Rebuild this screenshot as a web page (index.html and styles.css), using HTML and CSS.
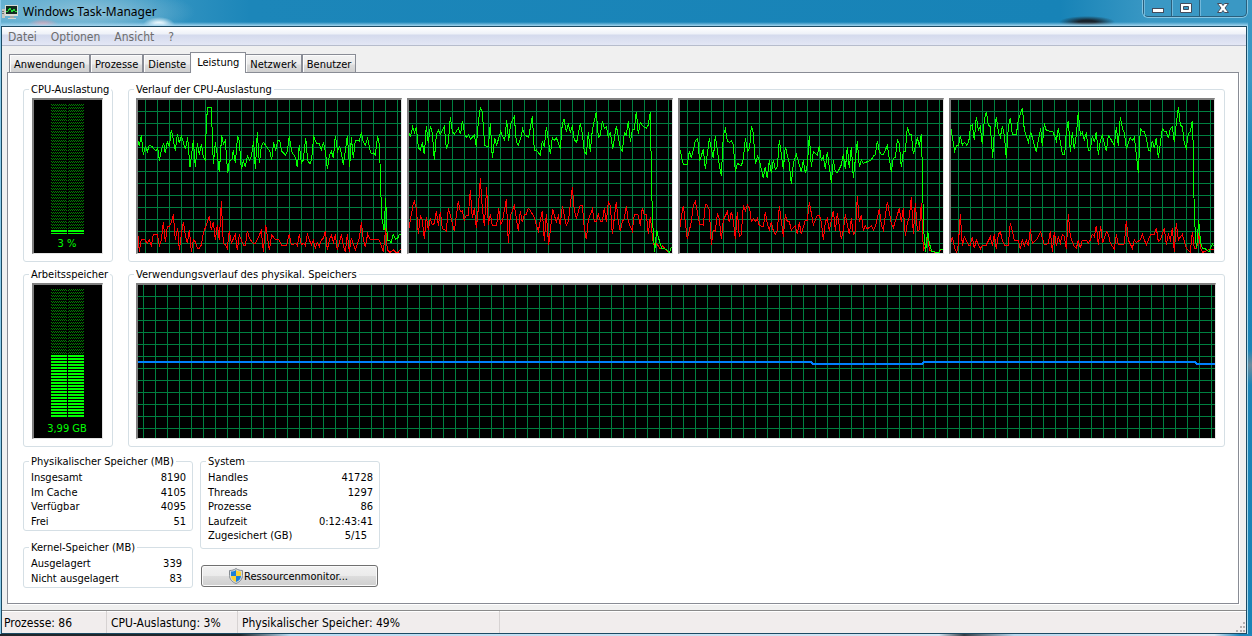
FILE: index.html
```html
<!DOCTYPE html>
<html lang="de">
<head>
<meta charset="utf-8">
<title>Windows Task-Manager</title>
<link rel="stylesheet" href="styles.css">
</head>
<body>
<div class="window">
  <header class="titlebar">
    <svg class="app-icon" width="16" height="16" viewBox="0 0 16 16" shape-rendering="crispEdges">
      <path fill="#c8c8c0" d="M0 4h3v9H0z"/><path fill="#6f7471" d="M0 6h2v1H0zM0 8h2v1H0z"/>
      <path fill="#d8dad4" d="M3 0h13v11H3z"/><path fill="#132b20" d="M4 1h11v8H4z"/>
      <path fill="none" stroke="#20df35" d="M4 6h2l2-3 2 4 2-3 1 2h2"/>
      <path fill="#a6aaa6" d="M8 11h4v2H8z"/><path fill="#d5d5cd" d="M6 13h8v1H6z"/>
    </svg>
    <h1 class="title">Windows Task-Manager</h1>
    <div class="controls">
      <button class="control" aria-label="Minimieren"><svg width="14" height="12" viewBox="0 0 14 12"><rect x="1.500" y="6.500" width="11" height="4" fill="#fff" stroke="#444c5c"/></svg></button>
      <button class="control" aria-label="Maximieren"><svg width="14" height="12" viewBox="0 0 14 12"><path fill="#fff" fill-rule="evenodd" stroke="#444c5c" d="M1.500 1.500h11v9h-11zM4.500 4.500v3h5v-3z"/></svg></button>
      <button class="control control-close" aria-label="Schließen"><svg width="14" height="12" viewBox="0 0 14 12"><path fill="#fff" stroke="#444c5c" d="M1.500 1.500h4L7 3.500l1.500-2h4L9 6l3.500 4.500h-4L7 8.500l-1.500 2h-4L5 6z"/></svg></button>
    </div>
  </header>
  <div class="client">
    <nav class="menu">
      <button class="menu-item">Datei</button>
      <button class="menu-item">Optionen</button>
      <button class="menu-item">Ansicht</button>
      <button class="menu-item">?</button>
    </nav>
    <div class="tabs" role="tablist">
      <button class="tab" role="tab">Anwendungen</button>
      <button class="tab" role="tab">Prozesse</button>
      <button class="tab" role="tab">Dienste</button>
      <button class="tab tab-active" role="tab" aria-selected="true">Leistung</button>
      <button class="tab" role="tab">Netzwerk</button>
      <button class="tab" role="tab">Benutzer</button>
    </div>
    <main class="panel">
      <div class="row">
        <fieldset class="group gauge-group">
          <legend>CPU-Auslastung</legend>
          <div class="gauge">
            <svg class="bars" width="33" height="130" shape-rendering="crispEdges">
              <defs>
                <pattern id="dim" width="2" height="3" patternUnits="userSpaceOnUse"><path fill="#008000" d="M0 0h1v1H0zM1 1h1v1H1z"/></pattern>
                <pattern id="lit" width="2" height="3" patternUnits="userSpaceOnUse"><path fill="#00ff00" d="M0 0h2v2H0z"/></pattern>
              </defs>
              <path fill="url(#dim)" d="M0 0h16v126H0zM17 0h16v126H17z"/>
              <path fill="url(#lit)" d="M0 126h16v4H0zM17 126h16v4H17z"/>
            </svg>
            <span class="reading">3 %</span>
          </div>
        </fieldset>
        <fieldset class="group chart-group">
          <legend>Verlauf der CPU-Auslastung</legend>
          <div class="charts charts-cpu">
            <div class="chart"><svg class="plot" viewBox="24 60 789 459" preserveAspectRatio="none">
              <polyline class="kernel" points="24,468 28,515 34,478 45,480 52,490 58,480 64,497 70,463 82,463 88,497 94,480 100,427 106,487 112,440 118,440 124,427 130,403 136,480 143,443 148,510 154,463 160,425 166,465 172,490 178,450 184,515 190,480 196,485 202,505 208,505 214,495 220,460 238,409 244,450 250,425 256,480 262,435 268,480 274,364 280,490 286,495 292,505 298,452 304,490 316,463 322,510 328,465 340,495 346,497 352,452 358,475 370,490 376,490 388,465 394,452 400,515 407,435 418,510 425,465 436,478 448,480 454,495 470,495 478,462 484,495 497,490 502,497 508,463 514,495 520,490 526,497 532,463 544,495 550,480 556,505 562,487 568,500 574,480 580,475 586,452 592,510 598,480 604,465 610,487 616,463 622,510 628,487 634,463 640,497 646,515 652,463 658,515 664,475 676,510 688,475 694,427 700,478 706,500 713,462 720,478 748,480 760,515 767,445 772,510 780,517 790,510 797,517 805,517 811,508"/>
              <polyline class="usage" points="24,183 28,198 34,166 40,225 46,200 52,215 58,196 66,200 78,213 83,203 88,243 94,210 101,190 106,220 112,185 118,200 124,149 130,180 136,213 142,163 148,189 154,167 160,187 166,207 173,172 180,262 190,180 196,262 202,190 208,225 214,192 220,230 226,240 229,125 233,83 244,83 250,253 256,187 262,225 268,277 275,165 280,192 286,182 293,280 298,243 306,238 310,210 316,250 323,167 328,183 334,268 340,243 346,262 352,228 358,240 364,230 371,183 376,268 382,157 388,250 394,200 400,187 412,203 420,215 425,240 431,187 437,213 443,182 449,182 455,213 466,225 472,215 478,168 485,215 497,233 502,262 508,195 514,250 520,240 527,173 533,240 540,253 545,238 551,170 560,190 568,190 574,210 580,187 586,213 592,268 598,228 604,213 610,235 616,168 623,213 629,200 634,220 640,255 646,213 652,168 659,262 664,172 670,235 676,180 688,183 694,157 700,187 706,195 713,174 720,210 724,222 730,218 736,225 743,167 748,195 750,250 753,350 755,410 762,450 767,355 772,480 778,480 783,490 790,463 797,478 803,475 808,463 813,463"/>
            </svg></div>
            <div class="chart"><svg class="plot" viewBox="27 60 789 459" preserveAspectRatio="none">
              <polyline class="kernel" points="27,443 40,370 43,365 49,385 55,463 61,408 67,420 73,478 79,410 85,450 91,415 97,435 103,430 109,392 115,437 121,395 127,445 139,453 145,385 151,405 163,453 175,363 181,395 187,392 193,420 199,405 205,405 211,330 217,415 223,385 229,445 235,385 241,295 247,385 253,437 260,322 265,435 271,403 277,437 290,435 296,385 302,435 308,420 319,358 325,490 331,408 343,377 349,415 355,453 361,392 367,427 373,405 379,403 385,385 391,392 403,412 409,435 415,453 427,392 433,482 439,403 446,495 458,387 463,405 469,427 475,408 481,435 487,377 499,437 505,425 517,322 523,392 529,415 541,375 547,377 553,445 559,478 565,420 577,387 583,423 589,423 595,402 601,425 607,425 613,385 619,425 625,365 631,377 637,463 649,365 655,427 661,453 667,425 673,415 679,377 685,425 697,453 703,403 715,405 721,437 727,383 733,405 739,403 745,463 751,410 758,480 764,500 770,490 780,507 788,497 797,510 810,517"/>
              <polyline class="usage" points="27,158 31,172 38,140 44,158 49,140 55,203 61,210 67,187 73,223 79,137 85,190 91,138 97,160 103,240 109,165 115,150 121,163 133,140 139,207 145,190 151,110 157,155 163,163 175,145 182,163 187,122 195,165 200,173 206,165 212,177 223,165 229,200 235,125 241,82 247,95 254,197 265,200 271,130 277,235 284,175 290,195 302,155 308,170 314,182 320,120 326,182 332,130 343,110 349,187 355,195 362,175 368,147 374,165 386,172 397,108 403,213 409,210 421,226 427,182 433,200 439,140 451,223 457,173 463,182 469,173 481,207 487,130 492,118 499,155 505,132 511,155 517,140 523,180 530,187 541,130 547,160 553,215 559,222 565,157 571,215 577,150 589,96 595,172 601,165 607,122 613,145 619,140 625,172 631,155 638,208 649,137 655,170 661,205 667,213 673,158 679,165 685,122 691,185 697,150 703,148 709,95 715,163 721,127 727,137 739,145 745,135 751,95 755,325 758,430 764,515 770,450 776,475 785,505 800,508 808,517 815,500"/>
            </svg></div>
            <div class="chart"><svg class="plot" viewBox="24 60 789 459" preserveAspectRatio="none">
              <polyline class="kernel" points="24,440 28,412 34,377 46,478 58,425 64,375 70,365 83,433 94,435 100,373 106,375 112,390 118,495 124,450 130,453 136,402 142,415 148,478 154,420 166,395 172,427 178,395 184,420 190,478 196,395 202,470 208,463 214,375 220,392 226,375 233,385 238,425 245,415 250,425 256,415 262,437 274,440 280,395 286,433 292,450 298,425 304,453 310,463 316,450 322,377 334,470 340,403 346,425 352,425 358,450 370,437 376,463 382,427 388,463 400,420 406,420 412,365 424,435 436,405 442,405 448,427 454,480 460,425 466,415 472,452 484,392 490,452 496,400 508,478 514,450 520,403 532,463 538,415 544,463 550,455 556,348 562,427 568,405 574,450 580,437 586,447 598,437 604,450 610,440 622,387 628,435 634,450 646,365 658,430 664,443 682,385 688,425 694,385 700,468 706,430 712,412 718,350 724,463 730,368 736,452 742,450 748,368 754,510 760,500 767,470 772,510 790,517 800,517 808,507"/>
              <polyline class="usage" points="24,210 34,253 46,253 52,213 58,235 70,183 77,175 83,243 94,208 100,268 112,175 124,235 130,167 142,255 148,287 154,165 160,148 166,183 172,187 178,182 184,193 190,275 196,250 208,257 214,238 220,175 227,213 233,203 238,137 244,160 250,253 257,228 263,245 274,295 280,260 286,295 292,240 298,280 304,240 310,268 316,260 322,180 334,268 340,200 352,250 358,313 364,250 373,223 388,275 394,240 400,280 406,255 412,167 418,262 424,215 436,225 442,197 448,240 454,228 460,268 466,215 478,308 484,240 490,275 496,278 508,255 514,223 520,268 526,200 532,265 538,200 544,295 556,182 562,262 568,240 574,250 598,240 604,228 610,225 616,182 622,215 628,223 634,223 646,197 658,275 664,235 670,233 676,180 682,190 688,262 694,215 700,215 706,140 712,163 718,163 724,222 730,200 736,172 742,200 748,163 750,230 753,370 755,450 761,515 767,452 772,490 780,515 800,517 806,507 813,507"/>
            </svg></div>
            <div class="chart"><svg class="plot" viewBox="21 60 789 459" preserveAspectRatio="none">
              <polyline class="kernel" points="21,485 25,470 32,505 38,517 43,495 49,402 55,497 61,470 73,495 79,495 85,470 91,505 97,480 109,507 115,495 127,495 139,470 145,497 151,463 157,508 163,463 169,455 175,480 181,495 193,495 199,428 211,480 223,480 229,507 235,480 241,497 247,480 253,497 259,447 265,490 277,480 290,455 301,495 313,490 319,452 325,515 331,455 337,497 343,470 349,490 355,463 361,470 367,507 373,403 379,470 391,500 397,505 403,480 409,505 415,480 427,480 433,490 439,480 445,463 451,470 457,437 463,495 470,437 476,490 487,455 493,463 499,490 511,507 517,463 523,495 541,492 547,422 553,480 565,505 571,480 577,487 589,480 595,463 607,495 613,480 619,465 631,463 637,443 643,485 649,480 655,462 661,445 667,495 673,463 679,480 685,445 691,515 697,428 703,480 715,463 727,505 739,517 745,455 751,505 758,507 764,460 770,505 776,517 800,507 811,507"/>
              <polyline class="usage" points="21,148 32,213 38,197 44,195 49,167 55,195 61,187 68,195 74,187 80,137 85,135 91,180 97,110 103,152 109,140 115,193 121,120 127,96 133,135 139,140 146,233 151,155 157,110 163,155 169,172 175,138 181,165 187,235 193,140 199,113 205,163 217,163 223,120 235,83 241,150 253,187 260,155 277,217 283,180 290,145 295,198 301,130 307,152 327,155 337,182 343,145 349,187 355,222 362,225 367,155 373,122 379,215 385,155 391,208 397,165 403,95 409,165 415,157 421,180 427,157 433,213 439,210 445,167 451,187 457,155 463,225 469,182 475,167 487,213 493,167 499,175 511,197 517,140 523,197 529,110 535,145 541,158 547,207 559,173 565,182 571,172 577,225 583,280 589,145 595,155 601,155 607,175 613,210 619,213 625,182 631,205 637,173 643,235 655,145 661,155 667,155 673,175 679,145 685,140 691,187 697,130 703,82 709,135 715,140 721,190 727,205 733,160 739,155 745,122 748,205 750,355 754,470 758,505 764,420 770,490 776,505 785,507 795,515 805,492 811,500"/>
            </svg></div>
          </div>
        </fieldset>
      </div>
      <div class="row">
        <fieldset class="group gauge-group">
          <legend>Arbeitsspeicher</legend>
          <div class="gauge">
            <svg class="bars" width="33" height="130" shape-rendering="crispEdges">
              <path fill="url(#dim)" d="M0 0h16v66H0zM17 0h16v66H17z"/>
              <path fill="url(#lit)" d="M0 66h16v63H0zM17 66h16v63H17z"/>
            </svg>
            <span class="reading">3,99 GB</span>
          </div>
        </fieldset>
        <fieldset class="group chart-group">
          <legend>Verwendungsverlauf des physikal. Speichers</legend>
          <div class="charts">
            <div class="chart chart-memory"><svg class="plot" viewBox="0 0 1077 153" preserveAspectRatio="none">
              <polyline class="memory" points="0,77 673,77 675,79 784,79 786,77 1057,77 1059,79 1077,79"/>
            </svg></div>
          </div>
        </fieldset>
      </div>
      <div class="details">
        <div class="column">
          <fieldset class="group stats-group">
            <legend>Physikalischer Speicher (MB)</legend>
            <dl class="stats">
              <dt>Insgesamt</dt><dd>8190</dd>
              <dt>Im Cache</dt><dd>4105</dd>
              <dt>Verfügbar</dt><dd>4095</dd>
              <dt>Frei</dt><dd>51</dd>
            </dl>
          </fieldset>
          <fieldset class="group stats-group">
            <legend>Kernel-Speicher (MB)</legend>
            <dl class="stats stats-kernel">
              <dt>Ausgelagert</dt><dd>339</dd>
              <dt>Nicht ausgelagert</dt><dd>83</dd>
            </dl>
          </fieldset>
        </div>
        <div class="column column-system">
          <fieldset class="group stats-group system-group">
            <legend>System</legend>
            <dl class="stats">
              <dt>Handles</dt><dd>41728</dd>
              <dt>Threads</dt><dd>1297</dd>
              <dt>Prozesse</dt><dd>86</dd>
              <dt>Laufzeit</dt><dd>0:12:43:41</dd>
              <dt>Zugesichert (GB)</dt><dd class="commit">5/15</dd>
            </dl>
          </fieldset>
          <button class="monitor-button">
            <svg width="14" height="16" viewBox="0 0 14 16">
              <path fill="#d6dadd" stroke="#858b90" d="M7 .5C5 2 3 2.500.5 2.500v5C.5 11 3 14 7 15.500 11 14 13.500 11 13.500 7.500v-5C11 2.500 9 2 7 .5z"/>
              <path fill="#1b7fd8" d="M7 2C5.500 3 4 3.500 2 3.600V8h5zM7 8h5c-.2 3-2 4.800-5 6z"/>
              <path fill="#fbd232" d="M7 2c1.500 1 3 1.500 5 1.600V8H7zM7 8H2c.2 3 2 4.800 5 6z"/>
            </svg>
            <span>Ressourcenmonitor...</span>
          </button>
        </div>
      </div>
    </main>
    <footer class="status">
      <span class="status-cell status-processes">Prozesse: 86</span>
      <span class="status-cell status-cpu">CPU-Auslastung: 3%</span>
      <span class="status-cell status-memory">Physikalischer Speicher: 49%</span>
      <svg class="grip" width="11" height="11" viewBox="0 0 11 11" shape-rendering="crispEdges"><path fill="#b5b0b0" d="M8 0h2v2H8zM5 4h2v2H5zM8 4h2v2H8zM1 8h2v2H1zM5 8h2v2H5zM8 8h2v2H8z"/></svg>
    </footer>
  </div>
</div>
</body>
</html>
```
FILE: styles.css
```css
* { box-sizing: border-box; }

body {
  margin: 0;
  color: #000;
  font: 11px/14px "DejaVu Sans Condensed", Tahoma, sans-serif;
}

button {
  margin: 0;
  padding: 0;
  border: 0;
  background: none;
  color: inherit;
  font: inherit;
}

.window {
  display: flex;
  flex-direction: column;
  min-height: 100vh;
  padding: 0 5px 2px 1px;
  background:
    linear-gradient(90deg, #20262a 0 240px, #b9dcf2 290px, #d4e6f4 75%, #333c44 77%, #b8d8ee 81%, #dceaf6 97%, #1e88bd 99%) bottom / 100% 2px no-repeat,
    linear-gradient(#3a98c4 0, #3a98c4 80px, #1781b3 180px, #1a84b7 350px, #6c8b9c 365px, #1a84b7 385px) right / 4px 100% no-repeat,
    linear-gradient(#8ccbea, #8ccbea) left / 1px 100% no-repeat,
    linear-gradient(transparent 22px, #a5d5ee 26px) top / 100% 26px no-repeat,
    radial-gradient(ellipse 16px 8px at 159px 25px, #f2fbff 30%, transparent) no-repeat,
    radial-gradient(ellipse 16px 6px at 43px 25px, #d8a4b5 20%, transparent) no-repeat,
    radial-gradient(ellipse 28px 6px at 1087px 22px, #18232c 30%, transparent) no-repeat,
    radial-gradient(ellipse 110px 26px at 85px 12px, #7fbbd6 20%, transparent) no-repeat,
    linear-gradient(90deg, #60afd1 0, #1c86b9 250px, #1783b7 1060px, #3a98c4 1150px);
}

.titlebar {
  display: flex;
  height: 26px;
  padding-left: 1px;
}

.app-icon { margin-top: 5px; }

.title {
  flex: 1;
  margin: 0;
  padding: 4px 0 0 5px;
  font: 12px/16px "Noto Sans", "Segoe UI", sans-serif;
}

.controls {
  display: flex;
  height: 17px;
  border: 1px solid #2a5f7c;
  border-top: 0;
  border-radius: 0 0 5px 5px;
  box-shadow: 0 0 0 1px #86c5e2;
}

.control {
  display: flex;
  align-items: center;
  justify-content: center;
  width: 28px;
  border-right: 1px solid #2a5f7c;
  box-shadow: inset 1px 0 #72b8da;
}

.control-close {
  width: 46px;
  border-right: 0;
}

.client {
  display: flex;
  flex: 1;
  flex-direction: column;
  border: 1px solid #1c4a63;
  background: #f0f0f0;
  box-shadow: 1px 0 #a6dcf2;
}

.menu {
  display: flex;
  gap: 14px;
  height: 19px;
  padding: 2px 0 0 6px;
  border-bottom: 1px solid #b6bccc;
  background: linear-gradient(#fff 0, #eef1f8 7px, #d4daed 8px, #e3e7f5 100%);
  color: #6d6d6d;
  font-size: 12px;
}

.tabs {
  display: flex;
  align-items: flex-end;
  height: 26px;
  padding-left: 7px;
}

.tab {
  flex: none;
  height: 18px;
  padding: 2px 4px 0;
  border: 1px solid #898c95;
  border-bottom: 0;
  background: linear-gradient(#f3f3f3 0, #ebebeb 9px, #dcdcdc 10px, #d0d0d0);
  box-shadow: inset 1px 1px #fcfcfc;
}

.tab-active {
  z-index: 1;
  height: 21px;
  margin: 0 -1px -1px;
  padding: 0 6px;
  background: #fff;
}

.panel {
  flex: 1;
  margin: 0 7px 6px 5px;
  padding: 8px 13px 15px 15px;
  border: 1px solid #898c95;
  background: #fff;
  box-shadow: 1px 1px #fff;
}

.row {
  display: flex;
  gap: 15px;
  margin-bottom: 4px;
}

.group {
  min-width: 0;
  margin: 0;
  border: 1px solid #d5dfe5;
  border-radius: 3px;
}

legend {
  min-width: max-content;
  margin-left: -2px;
  padding: 2px 2px 0;
  white-space: nowrap;
}

.gauge-group {
  flex: none;
  width: 90px;
  padding: 1px 9px 7px 8px;
}

.gauge-group legend { margin-left: -3px; }

.chart-group {
  flex: 1;
  padding: 1px 8px 7px 7px;
}

.gauge,
.chart {
  height: 156px;
  border: 2px solid #696969;
  border-color: #808080 #e3e3e3 #e3e3e3 #808080;
  border-right-width: 1px;
  border-bottom-width: 1px;
  background-color: #000;
}

.gauge {
  display: flex;
  flex-direction: column;
  align-items: center;
  padding: 4px 2px 0 0;
}

.bars { flex: none; }

.reading {
  padding-top: 3px;
  color: #0f0;
}

.charts {
  display: flex;
  gap: 5px;
}

.charts-cpu { padding-right: 1px; }

.chart {
  flex: 1;
  background-image:
    linear-gradient(90deg, transparent 11px, #008040 11px),
    linear-gradient(transparent 11px, #008040 11px);
  background-position: -4px 0, 0 0;
  background-size: 12px 12px;
}

.chart-memory { background-position: -6px 0, 0 0; }

.plot {
  display: block;
  width: 100%;
  height: 100%;
}

.plot polyline {
  fill: none;
  stroke-width: 1px;
  shape-rendering: crispEdges;
  vector-effect: non-scaling-stroke;
}

.plot .usage { stroke: #0f0; }
.plot .kernel { stroke: #f00; }
.plot .memory { stroke: #0080ff; stroke-width: 2px; }

.details {
  display: flex;
  gap: 7px;
  padding-top: 2px;
}

.column {
  display: flex;
  flex-direction: column;
  gap: 8px;
  width: 170px;
}

.column-system {
  gap: 16px;
  width: 180px;
}

.stats-group { padding: 2px 6px 1px 7px; }
.system-group { padding-bottom: 4px; }

.stats {
  display: grid;
  grid-template-columns: 1fr auto;
  grid-auto-rows: 15px 14px;
  margin: 0;
}

.stats dd {
  margin: 0;
  text-align: right;
}

.stats-kernel { padding-right: 4px; }
.stats .commit { padding-right: 6px; }

.monitor-button {
  display: flex;
  align-items: center;
  justify-content: center;
  gap: 1px;
  height: 22px;
  margin: 0 2px 0 1px;
  padding-right: 2px;
  border: 1px solid #707070;
  border-radius: 3px;
  background: linear-gradient(#f2f2f2 0, #ebebeb 49%, #dddddd 50%, #cfcfcf);
  box-shadow: inset 0 0 0 1px #fafafa;
}

.monitor-button span { padding-top: 2px; }

.status {
  display: flex;
  height: 23px;
  border-top: 1px solid #8a8a8a;
  background: #f1eded;
  box-shadow: inset 0 1px #fff;
  font-size: 12px;
  line-height: 24px;
}

.status-cell {
  height: 22px;
  padding-left: 4px;
  border-right: 1px solid #d7d3d3;
  white-space: nowrap;
}

.status-processes { width: 105px; padding-left: 2px; }
.status-cpu { width: 131px; }
.status-memory { width: 262px; }

.grip {
  align-self: flex-end;
  margin-left: auto;
}
```
